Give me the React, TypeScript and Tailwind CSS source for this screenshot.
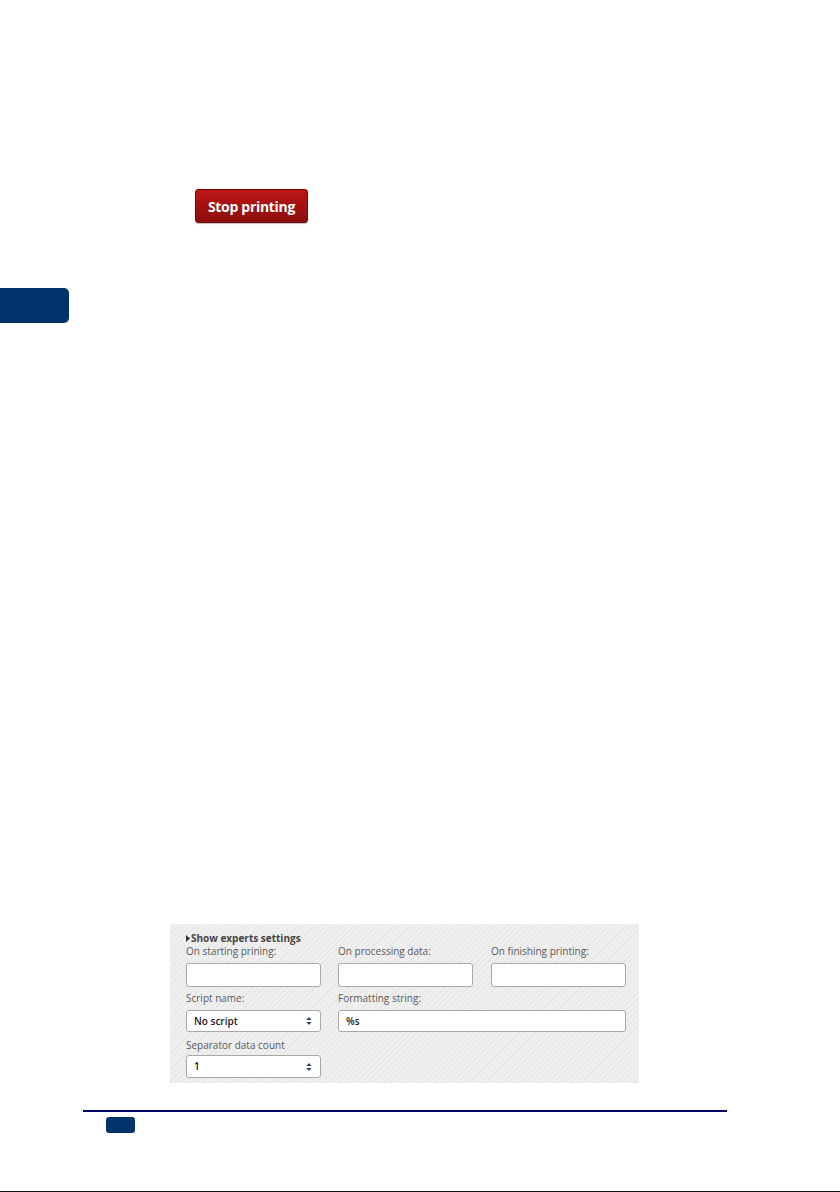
import React from "react";

const font = { fontFamily: '"Open Sans", "Noto Sans", "DejaVu Sans", sans-serif' };

/* small up/down arrows on the select boxes */
const SelectArrows = () => (
  <svg width="6" height="10" viewBox="0 0 6 10" className="shrink-0">
    <path d="M3 1 L5.5 4 H0.5 Z" fill="#2a3f6e" />
    <path d="M3 9 L5.5 6 H0.5 Z" fill="#2a3f6e" />
  </svg>
);

const Field: React.FC<{ label: string; value?: string; select?: boolean; h?: string; className?: string }> = ({
  label,
  value,
  select,
  h = "h-[24px]",
  className = "w-[135px]"
}) => {
  return (
    <div className={`flex flex-col ${className}`}>
      <div className="text-[10px] leading-[13px] text-[#5a5a5a]">{label}</div>
      <div
        className={`${h} mt-[5px] bg-white border border-[#a8a8a8] rounded-[3px] flex items-center justify-between pl-[7px] pr-[8px] text-[10px] text-[#222] font-semibold`}
      >
        <span>{value}</span>
        {select && <SelectArrows />}
      </div>
    </div>
  );
};

export default function App() {
  return (
    <div className="w-[840px] h-[1192px] bg-white flex flex-col relative" style={font}>
      {/* Stop printing button */}
      <div className="pt-[189px] pl-[195px]">
        <div className="w-[113px] h-[34px] rounded-[3px] bg-[linear-gradient(#bd1616,#8c0c0c)] border border-[#7a0808] shadow-[0_1px_1px_rgba(0,0,0,0.25)] flex items-center justify-center text-white font-bold text-[14px] tracking-[-0.3px]">
          Stop printing
        </div>
      </div>

      {/* side tab */}
      <div className="mt-[65px] w-[69px] h-[35px] bg-[#00336a] rounded-r-[5px]" />

      {/* expert settings panel */}
      <div className="mt-[601px] ml-[170px] w-[469px] h-[159px] bg-[#efefef] bg-[repeating-linear-gradient(135deg,#efefef_0px,#efefef_3px,#e6e6e6_3px,#e6e6e6_4px)] pl-[16px] pt-[8px]">
        <div className="flex items-center text-[10px] leading-[12px] font-bold text-[#444]">
          <svg width="4" height="7" viewBox="0 0 4 7" className="mr-[1px]">
            <path d="M0 0 L4 3.5 L0 7 Z" fill="#333" />
          </svg>
          Show experts settings
        </div>
        <div className="flex gap-[17px] mt-[1px]">
          <Field label="On starting prining:" />
          <Field label="On processing data:" />
          <Field label="On finishing printing:" className="w-[135px] ml-[1px]" />
        </div>
        <div className="flex gap-[17px] mt-[5px]">
          <Field label="Script name:" value="No script" select h="h-[22px]" />
          <Field label="Formatting string:" value="%s" h="h-[22px]" className="w-[288px]" />
        </div>
        <div className="flex mt-[7px]">
          <Field label="Separator data count" value="1" select h="h-[23px]" className="w-[135px] [&>div:last-child]:mt-[3px]" />
        </div>
      </div>

      {/* footer rule and page tab */}
      <div className="mt-[27px] ml-[83px] w-[644px] h-[2px] bg-[#000066]" />
      <div className="mt-[5px] ml-[106px] w-[29px] h-[16px] bg-[#00336a] rounded-[3px]" />

      <div className="mt-auto h-[1px] bg-[#111]" />
    </div>
  );
}
